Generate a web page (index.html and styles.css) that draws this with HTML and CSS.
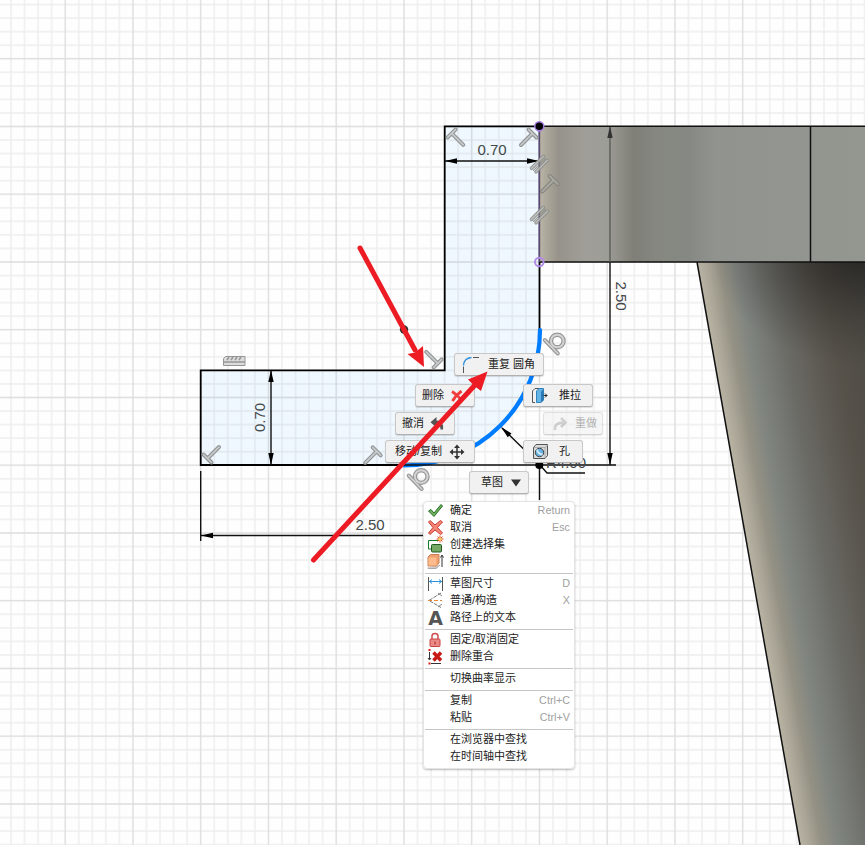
FILE: index.html
```html
<!DOCTYPE html>
<html lang="zh-CN">
<head>
<meta charset="utf-8">
<title>草图</title>
<link rel="stylesheet" href="styles.css">
</head>
<body>
<main class="viewport">
<svg class="canvas" width="865" height="845" viewBox="0 0 865 845">
  <defs>
    <pattern id="minor" x="58.425" y="51.975" width="13.55" height="13.55" patternUnits="userSpaceOnUse">
      <path d="M0 6.775H13.55M6.775 0V13.55" stroke="#000" stroke-opacity=".068" stroke-width="1.3"/>
    </pattern>
    <linearGradient id="slab" gradientUnits="userSpaceOnUse" x1="539" y1="0" x2="865" y2="0">
      <stop offset="0" stop-color="#bbb6a8"/><stop offset=".025" stop-color="#aaa699"/>
      <stop offset=".06" stop-color="#97938b"/><stop offset=".14" stop-color="#a09e98"/>
      <stop offset=".21" stop-color="#9d9d97"/><stop offset=".25" stop-color="#8e8d86"/>
      <stop offset=".29" stop-color="#7f7f78"/><stop offset=".36" stop-color="#858780"/>
      <stop offset=".46" stop-color="#868983"/><stop offset=".54" stop-color="#91938e"/><stop offset="1" stop-color="#949690"/>
    </linearGradient>
    <linearGradient id="leg" gradientUnits="userSpaceOnUse" x1="697" y1="0" x2="865" y2="0" gradientTransform="matrix(1 0 .1767 1 -46.3 0)">
      <stop offset="0" stop-color="#b8b3a3"/><stop offset=".06" stop-color="#aaa596"/>
      <stop offset=".13" stop-color="#949184"/><stop offset=".23" stop-color="#808580"/>
      <stop offset=".32" stop-color="#777a75"/><stop offset=".44" stop-color="#6b6b66"/>
      <stop offset=".6" stop-color="#5f5c55"/><stop offset=".74" stop-color="#565149"/><stop offset="1" stop-color="#4d4b45"/>
    </linearGradient>
    <radialGradient id="shade" gradientUnits="userSpaceOnUse" cx="0" cy="0" r="1" gradientTransform="translate(860 245) scale(150 120)">
      <stop offset="0" stop-color="#1c1b19" stop-opacity=".85"/><stop offset=".4" stop-color="#232220" stop-opacity=".5"/><stop offset="1" stop-color="#333" stop-opacity="0"/>
    </radialGradient>
    <g id="perp" fill="none" stroke-linecap="round">
      <path d="M-4 4 4-4M0 0 11.5 11.5" stroke="#929595" stroke-width="4"/>
      <path d="M-4 4 4-4M0 0 11.5 11.5" stroke="#c8cccd" stroke-width="1.7"/>
    </g>
    <g id="perp-dark" fill="none" stroke-linecap="round">
      <path d="M-4 4 4-4M0 0 11.5 11.5" stroke="#85847e" stroke-width="4"/>
      <path d="M-4 4 4-4M0 0 11.5 11.5" stroke="#a9a8a1" stroke-width="1.8"/>
    </g>
    <g id="parallel" fill="none" stroke-linecap="round">
      <path d="M-8 4 4-8M-3.5 7.5 8-4" stroke="#8c8e8b" stroke-width="3.6"/>
      <path d="M-8 4 4-8M-3.5 7.5 8-4" stroke="#b9bbb7" stroke-width="1.6"/>
      <path d="M-6 6 6-6" stroke="#8c8e8b" stroke-width="1.2"/>
    </g>
    <g id="tangent" fill="none" stroke-linecap="round">
      <path d="M-12.500-1 .5 12.500" stroke="#999" stroke-width="4"/>
      <circle r="6.300" stroke="#999" stroke-width="4.400"/>
      <path d="M-12.500-1 .5 12.500" stroke="#d4d4d4" stroke-width="1.700"/>
      <circle r="6.300" stroke="#d4d4d4" stroke-width="1.900"/>
    </g>
    <path id="head" d="M0 0 12-2.700V2.700Z"/>
  </defs>

  <rect width="865" height="845" fill="#fefefe"/>
  <path class="profile" d="M444.500 126.500H539.500V330A135.500 135.500 0 0 1 404 465.500H200.500V370.500H444.500Z"/>
  <rect width="865" height="845" fill="url(#minor)"/>
  <path class="grid-major" d="M65.2 0V845M133 0V845M200.7 0V845M268.500 0V845M336.2 0V845M404 0V845M471.700 0V845M539.500 0V845M607.200 0V845M675 0V845M742.700 0V845M810.500 0V845M0 58.700H865M0 126.500H865M0 194.200H865M0 262H865M0 329.700H865M0 397.500H865M0 465.200H865M0 533H865M0 600.700H865M0 668.500H865M0 736.200H865M0 804H865"/>

  <rect x="539" y="126" width="326" height="136" fill="url(#slab)"/>
  <path d="M697 262H865V845H800Z" fill="url(#leg)"/>
  <path d="M697 262H865V410H723Z" fill="url(#shade)"/>
  <path class="edge" d="M539 126.200H865M539 262H865M810.500 126V262M697 262 800 845"/>

  <path class="outline" d="M539.500 126.300H444.700V370.300H200.700V465H404M539.500 262V330"/>
  <path d="M539.300 126V262" stroke="#57486f" stroke-width="1.800"/>
  <circle cx="404" cy="329.500" r="4.200" fill="#333"/>
  <path d="M540 330A136 135.500 0 0 1 404 465.500" fill="none" stroke="#007cff" stroke-width="4.200" stroke-linecap="round"/>

  <g class="dim-lines">
    <path d="M445 161H539M271 371V465M200.700 471V541M201 535.500H424M539.500 465V500M404 465H616M502 428 540 465 547 473H585"/>
    <path d="M610 262V465"/>
    <path d="M610 127V262" stroke="#5d5d59"/>
  </g>
  <g>
    <use href="#head" x="445" y="161"/>
    <use href="#head" transform="translate(539 161) rotate(180)"/>
    <use href="#head" transform="translate(271 370) rotate(90)"/>
    <use href="#head" transform="translate(271 465) rotate(-90)"/>
    <use href="#head" x="201" y="535.500"/>
    <use href="#head" transform="translate(610 465) rotate(-90)"/>
    <use href="#head" transform="translate(610 126) rotate(90)" fill="#333"/>
    <use href="#head" transform="translate(501 427) rotate(44)"/>
  </g>
  <g class="dim-text">
    <text x="492" y="155">0.70</text>
    <text transform="translate(265 417.500) rotate(-90)">0.70</text>
    <text x="370" y="529.500">2.50</text>
    <text transform="translate(616 296) rotate(90)">2.50</text>
    <text x="566" y="467.500">R4.00</text>
  </g>
  <circle cx="539.300" cy="126.200" r="4.500" fill="#000" stroke="#a47ee0" stroke-width="1.500"/>
  <circle cx="539.300" cy="262" r="4.300" fill="none" stroke="#b28be9" stroke-width="2"/>
  <circle cx="539.300" cy="465" r="4" fill="#000"/>

  <use href="#perp" x="451.700" y="133.300"/>
  <use href="#perp" transform="translate(532.500 133.500) rotate(90)"/>
  <use href="#perp-dark" transform="translate(553.700 180) rotate(90)"/>
  <use href="#perp" transform="translate(207.500 458.500) rotate(-90)"/>
  <use href="#perp" transform="translate(376.700 451.300) rotate(90)"/>
  <use href="#perp" transform="translate(437.700 363.300) rotate(180)"/>
  <use href="#parallel" x="539.500" y="164.300" opacity=".9"/>
  <use href="#parallel" x="539.500" y="215.300" opacity=".9"/>
  <use href="#tangent" x="557.300" y="341"/>
  <use href="#tangent" x="421.200" y="476.500"/>
  <g fill="#dcdcdc" stroke="#969696">
    <path d="M223.500 365.500V358.500L225.500 356.500H245V365.500Z"/>
    <path d="M224 362H245M227 360 229 357M231 360 233 357M235 360 237 357M239 360 241 357" fill="none" stroke-width="1.500"/>
  </g>
</svg>

<nav class="marking-menu">
  <button class="pie repeat"><svg width="18" height="18"><path d="M1.500 17V10.500" stroke="#555" fill="none"/><path d="M1.500 9.500Q2 2 9.500 1.500" stroke="#2d91dd" stroke-width="1.300" fill="none"/><path d="M11 1.500H17" stroke="#555"/></svg><span>重复 圆角</span></button>
  <button class="pie delete"><span>删除</span><svg width="12" height="12"><path d="M1 1.500Q7 5 11 11M10.500 1Q5 5 1.500 11" stroke="#f03c3c" stroke-width="2.900" fill="none"/></svg></button>
  <button class="pie pushpull"><svg width="18" height="17"><path d="M1.500 15.500V4L4 1.500H8M1.500 15.500H4" fill="none" stroke="#555"/><path d="M5.500 4 8 1.500H12.500V13L10 15.500H5.500Z" fill="#64b3e6" stroke="#3484bc"/><path d="M10 4.500V15.500L12.500 13V2Z" fill="#2b7ab5"/><path d="M12.500 8.500H16M14 6.500 16 8.500 14 10.500" fill="none" stroke="#222"/></svg><span>推拉</span></button>
  <button class="pie undo"><span>撤消</span><svg width="15" height="15"><path d="M6.500 1V4.500Q14 4.500 13 13.500H10.500Q10.500 8.500 6.500 8.500V11.500L.5 6.200Z" fill="#555"/></svg></button>
  <button class="pie redo" disabled><svg width="15" height="14"><path d="M2 13Q1 5.500 11 5.500M8 1 12.500 5.500 8 10" fill="none" stroke="#aaa" stroke-width="2.500"/></svg><span>重做</span></button>
  <button class="pie move"><span>移动/复制</span><svg width="16" height="16"><path d="M8 2V14M2 8H14" stroke="#333" stroke-width="1.500"/><path d="M8 .5 11 4H5ZM8 15.500 5 12H11ZM.5 8 4 5V11ZM15.500 8 12 11V5Z" fill="#333"/></svg></button>
  <button class="pie hole"><svg width="17" height="17"><path d="M1.500 4.500 4 1.500H15.500V12.500L13 15.500H1.500Z" fill="#dadada" stroke="#555"/><path d="M13 15V5L15.500 2M2 4.500H13" stroke="#aaa" fill="none"/><circle cx="7.500" cy="9.500" r="4.200" fill="#66b4e5" stroke="#444"/><path d="M5 6.500Q6 11 10.500 11.500" stroke="#d4ecfa" stroke-width="1.800" fill="none"/></svg><span>孔</span></button>
  <button class="pie sketch"><span>草图</span><svg width="10" height="8"><path d="M0 .5H10L5 7.500Z" fill="#333"/></svg></button>
</nav>

<div class="context-menu">
  <ul>
    <li><svg viewBox="0 0 17 17"><path d="M1.500 9 4 7.500 7 11 14 2.500 15.500 4 7 14.500Z" fill="#70b05c" stroke="#28702a"/></svg><span>确定</span><kbd>Return</kbd></li>
    <li><svg viewBox="0 0 17 17"><path d="M1.500 3 3 1.500 8 6 13.500 1.500 15.500 3 10.500 8.500 15.500 14 13.500 15.500 8 11 3 15.500 1.500 14 6 8.500Z" fill="#f58678" stroke="#c73a31"/></svg><span>取消</span><kbd>Esc</kbd></li>
    <li><svg viewBox="0 0 17 17"><path d="M11 4.500H1.500V13H4" fill="none" stroke="#187a24"/><rect x="4.500" y="8.500" width="10" height="7.500" rx="1" fill="#75a865" stroke="#215a23"/><path d="M13-.5V6.500M9.500 3H16.500M10.500.5 15.500 5.500M15.500.5 10.500 5.500" stroke="#d84b20"/><circle cx="13" cy="3" r="1.500" fill="#ffd24d"/></svg><span>创建选择集</span></li>
    <li><svg viewBox="0 0 17 17"><path d="M1 14.500V15.500H9L13 12" fill="#ccc" stroke="#aaa"/><path d="M1 4 3.500 1.500H12V10L9.500 13H1Z" fill="#f0a06c" stroke="#c98056"/><path d="M1.500 4.500H9.500V12.500H1.500Z" fill="#ffbb8c"/><path d="M15 14V3M13.500 4.500 15 2 16.500 4.500" fill="none" stroke="#333"/></svg><span>拉伸</span></li>
  </ul>
  <ul>
    <li><svg viewBox="0 0 17 17"><path d="M1.500 2V16M15.500 2V16" stroke="#555"/><path d="M2 6.500H15M5 4.500 2.500 6.500 5 8.500M12 4.500 14.500 6.500 12 8.500" fill="none" stroke="#2d91dd"/></svg><span>草图尺寸</span><kbd>D</kbd></li>
    <li><svg viewBox="0 0 17 17"><path d="M14 1 2 8.500 14 15.500" fill="none" stroke="#777" stroke-dasharray="4 1"/><path d="M1 8.500H15" stroke="#e28b3c" stroke-dasharray="4 2"/><path d="M11 1 15 4M11 15 15 12" stroke="#888"/></svg><span>普通/构造</span><kbd>X</kbd></li>
    <li><b>A</b><span>路径上的文本</span></li>
  </ul>
  <ul>
    <li><svg viewBox="0 0 17 17"><path d="M5 8V5Q5 2.500 8 2.500T11 5V8" fill="none" stroke="#ce4e50" stroke-width="1.500"/><rect x="3" y="8" width="10" height="7.500" rx="1" fill="#e98a87" stroke="#c54343"/><path d="M8 10.500V13.500" stroke="#a92020"/></svg><span>固定/取消固定</span></li>
    <li><svg viewBox="0 0 17 17"><path d="M2.500 4V11M1 10 2.500 12 4 10M4 15.500H14" fill="none" stroke="#333"/><path d="M1.500 1H3.500V3H1.500ZM1.500 14.500H3.500V16.500H1.500Z" fill="#e01919"/><path d="M6.500 4.500 14 12.500M14 4.500 6.500 12.500" stroke="#c71a16" stroke-width="3.400"/></svg><span>删除重合</span></li>
  </ul>
  <ul><li><i></i><span>切换曲率显示</span></li></ul>
  <ul>
    <li><i></i><span>复制</span><kbd>Ctrl+C</kbd></li>
    <li><i></i><span>粘贴</span><kbd>Ctrl+V</kbd></li>
  </ul>
  <ul>
    <li><i></i><span>在浏览器中查找</span></li>
    <li><i></i><span>在时间轴中查找</span></li>
  </ul>
</div>

<svg class="annotations" width="865" height="845" viewBox="0 0 865 845">
  <path d="M360 248 415 350M313.500 560 475 385" stroke="#ed1c24" stroke-width="5" stroke-linecap="round"/>
  <path d="M424 367 407.500 354 415 352.500 423 346ZM487.500 371.500 481 391 474.500 386 468 379.500Z" fill="#ed1c24"/>
</svg>
</main>
</body>
</html>
```
FILE: styles.css
```css
* { box-sizing: border-box; }
body { margin: 0; overflow: hidden; background: #fff; font: 11px/17px "Liberation Sans", "Noto Sans CJK SC", sans-serif; color: #222; }
.viewport { position: relative; width: 865px; height: 845px; overflow: hidden; }
.canvas { display: block; }
.profile { fill: #eff8fe; }
.grid-major { stroke: #000; stroke-opacity: .065; stroke-width: 1.3; }
.edge { fill: none; stroke: #111; stroke-width: 1.5; }
.outline { fill: none; stroke: #000; stroke-width: 1.8; }
.dim-lines { fill: none; stroke: #111; stroke-width: 1.4; }
.dim-text { font-size: 15px; fill: #43484a; text-anchor: middle; }
.marking-menu, .annotations { position: absolute; inset: 0; pointer-events: none; }
.pie {
  position: absolute; display: flex; align-items: center; height: 23px; width: 60px;
  padding: 0 7px; margin: 0; border: 1px solid #c8c8c8; border-bottom-color: #b0b0b0; border-radius: 3px;
  background: #f1f1f1; box-shadow: 0 1px 1px #0002; font: inherit; color: #222; white-space: nowrap; pointer-events: auto;
}
.pie svg { flex: none; }
.repeat { left: 454px; top: 353px; width: 90px; gap: 8px; }
.delete { left: 415px; top: 384px; gap: 7px; padding-left: 6px; }
.pushpull { left: 523px; top: 384px; width: 70px; gap: 10px; }
.undo { left: 395px; top: 412px; gap: 6px; padding-left: 6px; }
.redo { left: 543px; top: 412px; gap: 7px; padding-left: 9px; opacity: .55; color: #777; }
.move { left: 385px; top: 440px; width: 90px; gap: 7px; padding-left: 9px; }
.hole { left: 523px; top: 440px; gap: 10px; padding-left: 8px; }
.sketch { left: 469px; top: 471px; gap: 8px; padding-left: 11px; }
.context-menu {
  position: absolute; left: 423px; top: 501px; width: 152px; height: 268px; padding: 1px;
  background: #fffffff7; border: 1px solid #e4e4e4; border-radius: 4px; box-shadow: 0 1px 2px #0004;
}
.context-menu ul { margin: 0; padding: 0; list-style: none; }
.context-menu ul + ul { border-top: 1px solid #c6c6c6; margin-top: 2px; padding-top: 2px; }
.context-menu li { display: flex; align-items: center; height: 17px; padding: 0 3px 2px 2px; white-space: nowrap; }
.context-menu li > svg, .context-menu i, .context-menu b { flex: none; width: 17px; height: 17px; margin-right: 6px; overflow: visible; }
.context-menu b { font: bold 19px/19px "DejaVu Sans", sans-serif; color: #555; text-align: center; }
.context-menu kbd { margin-left: auto; font: 10.8px/17px "Liberation Sans", sans-serif; color: #a0a0a0; }
```
